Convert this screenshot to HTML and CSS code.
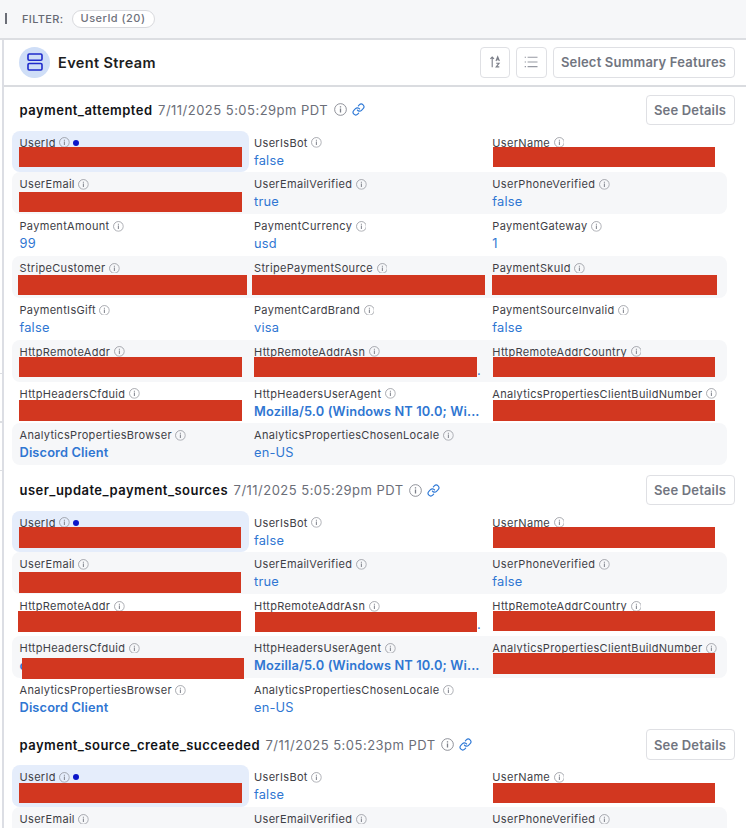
FILE: index.html
```html
<!DOCTYPE html>
<html lang="en">
<head>
<meta charset="utf-8">
<title>Event Stream</title>
<link rel="stylesheet" href="styles.css">
</head>
<body>
<svg class="defs" aria-hidden="true">
  <symbol id="info" viewBox="0 0 12 12">
    <circle cx="6" cy="6" r="5.4" fill="none" stroke="currentColor" stroke-width=".8"/>
    <path d="M6 5v3.8M6 3v1.2" fill="none" stroke="currentColor" stroke-width="1.2"/>
  </symbol>
  <symbol id="link" viewBox="0 0 24 24">
    <path d="M10 13a5 5 0 0 0 7.54.54l3-3a5 5 0 0 0-7.07-7.07l-1.72 1.71M14 11a5 5 0 0 0-7.54-.54l-3 3a5 5 0 0 0 7.07 7.07l1.71-1.71" fill="none" stroke="currentColor" stroke-width="2.1" stroke-linecap="round"/>
  </symbol>
</svg>
<div class="filterbar">
  <span class="divider"></span>
  <span class="filter-label">FILTER:</span>
  <span class="pill">UserId (20)</span>
</div>
<div class="body">
  <div class="rail"><i></i><i></i><i></i></div>
  <main class="panel">
    <header class="panel-head">
      <span class="badge"><svg width="16" height="18" viewBox="0 0 16 18"><g fill="none" stroke="#1f2bcb" stroke-width="1.6"><rect x="1" y="1" width="14" height="6.3" rx="1.2"/><rect x="1" y="10.5" width="14" height="6.5" rx="1.2"/></g></svg></span>
      <h1>Event Stream</h1>
      <button class="btn icon"><svg width="14" height="14" viewBox="0 0 14 14" fill="none" stroke="#7b7e88" stroke-width="1.1"><path d="M4.2 12.3V2.2M2.4 3.8 4.2 2l1.8 1.8"/><path d="M8 6 9.7 1.7 11.4 6M8.6 4.7h2.2M8.2 8.2h2.9l-2.9 3.7h3.1"/></svg></button>
      <button class="btn icon"><svg width="14" height="14" viewBox="0 0 14 14" stroke="#9699a2" stroke-width="1.1"><path d="M3.6 2.3H13.5M3.6 7H13.5M3.6 11.6H13.5M.7 2.3H2M.7 7H2M.7 11.6H2"/></svg></button>
      <button class="btn wide">Select Summary Features</button>
    </header>
    <div id="events"></div>
  </main>
</div>
<script src="events.js"></script>
</body>
</html>
```
FILE: styles.css
```css
* { box-sizing: border-box; }
html, body { height: 100%; }
body { margin: 0; overflow: hidden; background: #fff; color: #1c1d21; font-family: Inter, "Liberation Sans", sans-serif; display: flex; flex-direction: column; }
.defs { position: absolute; width: 0; height: 0; }
button { font-family: inherit; }

.filterbar { flex: none; height: 39.5px; background: #f6f7f9; border-bottom: 2px solid #dcdee2; display: flex; align-items: center; }
.divider { width: 1.5px; height: 11px; margin-left: 5px; background: #6b6e77; }
.filter-label { width: 49.5px; margin-left: 15.5px; font-size: 11px; font-weight: 500; letter-spacing: .36px; color: #666973; }
.pill { height: 18.5px; width: 83px; border: 1.5px solid #d9dade; border-radius: 10px; background: #fff; font-size: 11px; line-height: 15.5px; font-weight: 500; letter-spacing: .48px; text-align: center; color: #6f727c; }

.body { flex: 1; min-height: 0; display: flex; }
.rail { flex: none; width: 4px; border-right: 2px solid #dcdee4; padding-top: 333px; }
.rail i { display: block; height: 1.5px; background: #dcdee2; margin-bottom: 47px; }
.panel { flex: 1; min-width: 0; }
.panel-head { height: 47.5px; border-bottom: 2px solid #dadce0; display: flex; align-items: center; padding: 0 11.5px 0 15px; }
.badge { width: 31px; height: 31px; border-radius: 50%; background: #cfdef7; display: flex; align-items: center; justify-content: center; }
h1 { flex: 1; margin: 0 0 0 8px; font-size: 14.5px; font-weight: 600; letter-spacing: .38px; }
.btn { height: 30.5px; border: 1.3px solid #dfe0e4; border-radius: 4px; background: #fff; color: #717580; font-size: 13px; font-weight: 600; letter-spacing: .18px; padding: 0; text-align: center; white-space: nowrap; flex: none; }
.btn.icon { width: 30.5px; margin-right: 6px; display: flex; align-items: center; justify-content: center; }
.btn.wide { width: 182px; }
.btn.details { width: 89px; }

.event-head { height: 45.4px; padding: 9.6px 11.5px 0 15.5px; display: flex; align-items: flex-start; }
.event:first-child .event-head { height: 43.6px; padding-top: 7.6px; }
.event-line { flex: 1; height: 30.5px; display: flex; align-items: center; }
.event-name { font-size: 13px; font-weight: 600; letter-spacing: .47px; color: #121316; }
.event-time { font-size: 13px; letter-spacing: .48px; color: #6b6e78; margin-left: 5.5px; }
.event-line .info { width: 13px; height: 13px; margin-left: 5.5px; color: #7e818a; }
.link { width: 13px; height: 13px; margin-left: 5px; color: #2d78d6; }

.grid { margin-left: 8px; width: 715px; }
.row { height: 41.83px; border-radius: 8px; display: grid; grid-template-columns: 237px 238.3px 239.7px; }
.row:nth-child(even) { background: #f6f7f9; }
.cell { position: relative; min-width: 0; padding: 4px 0 0 5px; border-radius: 8px; }
.cell:first-child { padding-left: 7.5px; }
.cell.match { background: #e5edfb; }
.label { height: 16px; display: flex; align-items: center; font-size: 11px; letter-spacing: .32px; color: #3e4046; white-space: nowrap; }
.label .info { width: 10.8px; height: 10.8px; margin-left: 3.5px; color: #878a93; }
.dot { width: 6px; height: 6px; border-radius: 50%; background: #0b16c8; margin-left: 3px; }
.value { height: 18px; line-height: 19px; font-size: 12.8px; letter-spacing: .2px; color: #2f76d2; white-space: nowrap; }
.value.strong { font-weight: 600; letter-spacing: .14px; }
.value.end { text-align: right; padding-right: 6.5px; line-height: 22px; }
.redaction { position: absolute; left: var(--x); top: var(--y); width: var(--w); height: 20.4px; background: #d23720; }
```
FILE: events.js
```js
// Field: [name, value, redaction [x, y, width] within the cell, value style]
const agent = ["HttpHeadersUserAgent", "Mozilla/5.0 (Windows NT 10.0; Wi...", null, "strong"];
const browser = [
  ["AnalyticsPropertiesBrowser", "Discord Client", null, "strong"],
  ["AnalyticsPropertiesChosenLocale", "en-US"]
];
const events = [
  { name: "payment_attempted", time: "7/11/2025 5:05:29pm PDT", rows: [
    [["UserId", "", [7.3, 16.2, 222.4]], ["UserIsBot", "false"], ["UserName", "", [5.6, 16, 222.6]]],
    [["UserEmail", "", [7.3, 19.5, 222.6]], ["UserEmailVerified", "true"], ["UserPhoneVerified", "false"]],
    [["PaymentAmount", "99"], ["PaymentCurrency", "usd"], ["PaymentGateway", "1"]],
    [["StripeCustomer", "", [6.3, 18.8, 228.7]], ["StripePaymentSource", "", [3.3, 18.8, 232.7]], ["PaymentSkuId", "", [4.4, 18.9, 225]]],
    [["PaymentIsGift", "false"], ["PaymentCardBrand", "visa"], ["PaymentSourceInvalid", "false"]],
    [["HttpRemoteAddr", "", [7.4, 17.2, 222.6]], ["HttpRemoteAddrAsn", ".", [5.4, 16.9, 222.4], "end"], ["HttpRemoteAddrCountry", "", [5.6, 16.9, 222.2]]],
    [["HttpHeadersCfduid", "", [7.4, 18.9, 222.6]], agent, ["AnalyticsPropertiesClientBuildNumber", "", [5.9, 18.7, 222.2]]],
    browser
  ] },
  { name: "user_update_payment_sources", time: "7/11/2025 5:05:29pm PDT", rows: [
    [["UserId", "", [7, 16.8, 222.4]], ["UserIsBot", "false"], ["UserName", "", [5.4, 16.8, 222.4]]],
    [["UserEmail", "", [6.8, 20, 222.3]], ["UserEmailVerified", "true"], ["UserPhoneVerified", "false"]],
    [["HttpRemoteAddr", "", [6.3, 17, 222.5]], ["HttpRemoteAddrAsn", ".", [6, 17.7, 222.4], "end"], ["HttpRemoteAddrCountry", "", [5.4, 16.8, 222.4]]],
    [["HttpHeadersCfduid", "c", [10, 22.2, 222.4], "strong"], agent, ["AnalyticsPropertiesClientBuildNumber", "", [5.4, 17.1, 222.5]]],
    browser
  ] },
  { name: "payment_source_create_succeeded", time: "7/11/2025 5:05:23pm PDT", rows: [
    [["UserId", "", [7, 17.8, 222.7]], ["UserIsBot", "false"], ["UserName", "", [5.5, 17.6, 222.7]]],
    [["UserEmail", ""], ["UserEmailVerified", "true"], ["UserPhoneVerified", "false"]]
  ] }
];

const icon = id => `<svg class="${id}"><use href="#${id}"/></svg>`;
const cell = ([name, value, bar, style = ""]) => {
  const match = name === "UserId";
  return `<div class="cell${match ? " match" : ""}">
    <div class="label">${name}${icon("info")}${match ? '<span class="dot"></span>' : ""}</div>
    ${value ? `<div class="value ${style}">${value}</div>` : ""}
    ${bar ? `<div class="redaction" style="--x:${bar[0]}px;--y:${bar[1]}px;--w:${bar[2]}px"></div>` : ""}
  </div>`;
};
document.getElementById("events").innerHTML = events.map(e => `<section class="event">
  <div class="event-head">
    <div class="event-line"><span class="event-name">${e.name}</span><span class="event-time">${e.time}</span>${icon("info")}${icon("link")}</div>
    <button class="btn details">See Details</button>
  </div>
  <div class="grid">${e.rows.map(r => `<div class="row">${r.map(cell).join("")}</div>`).join("")}</div>
</section>`).join("");
```
